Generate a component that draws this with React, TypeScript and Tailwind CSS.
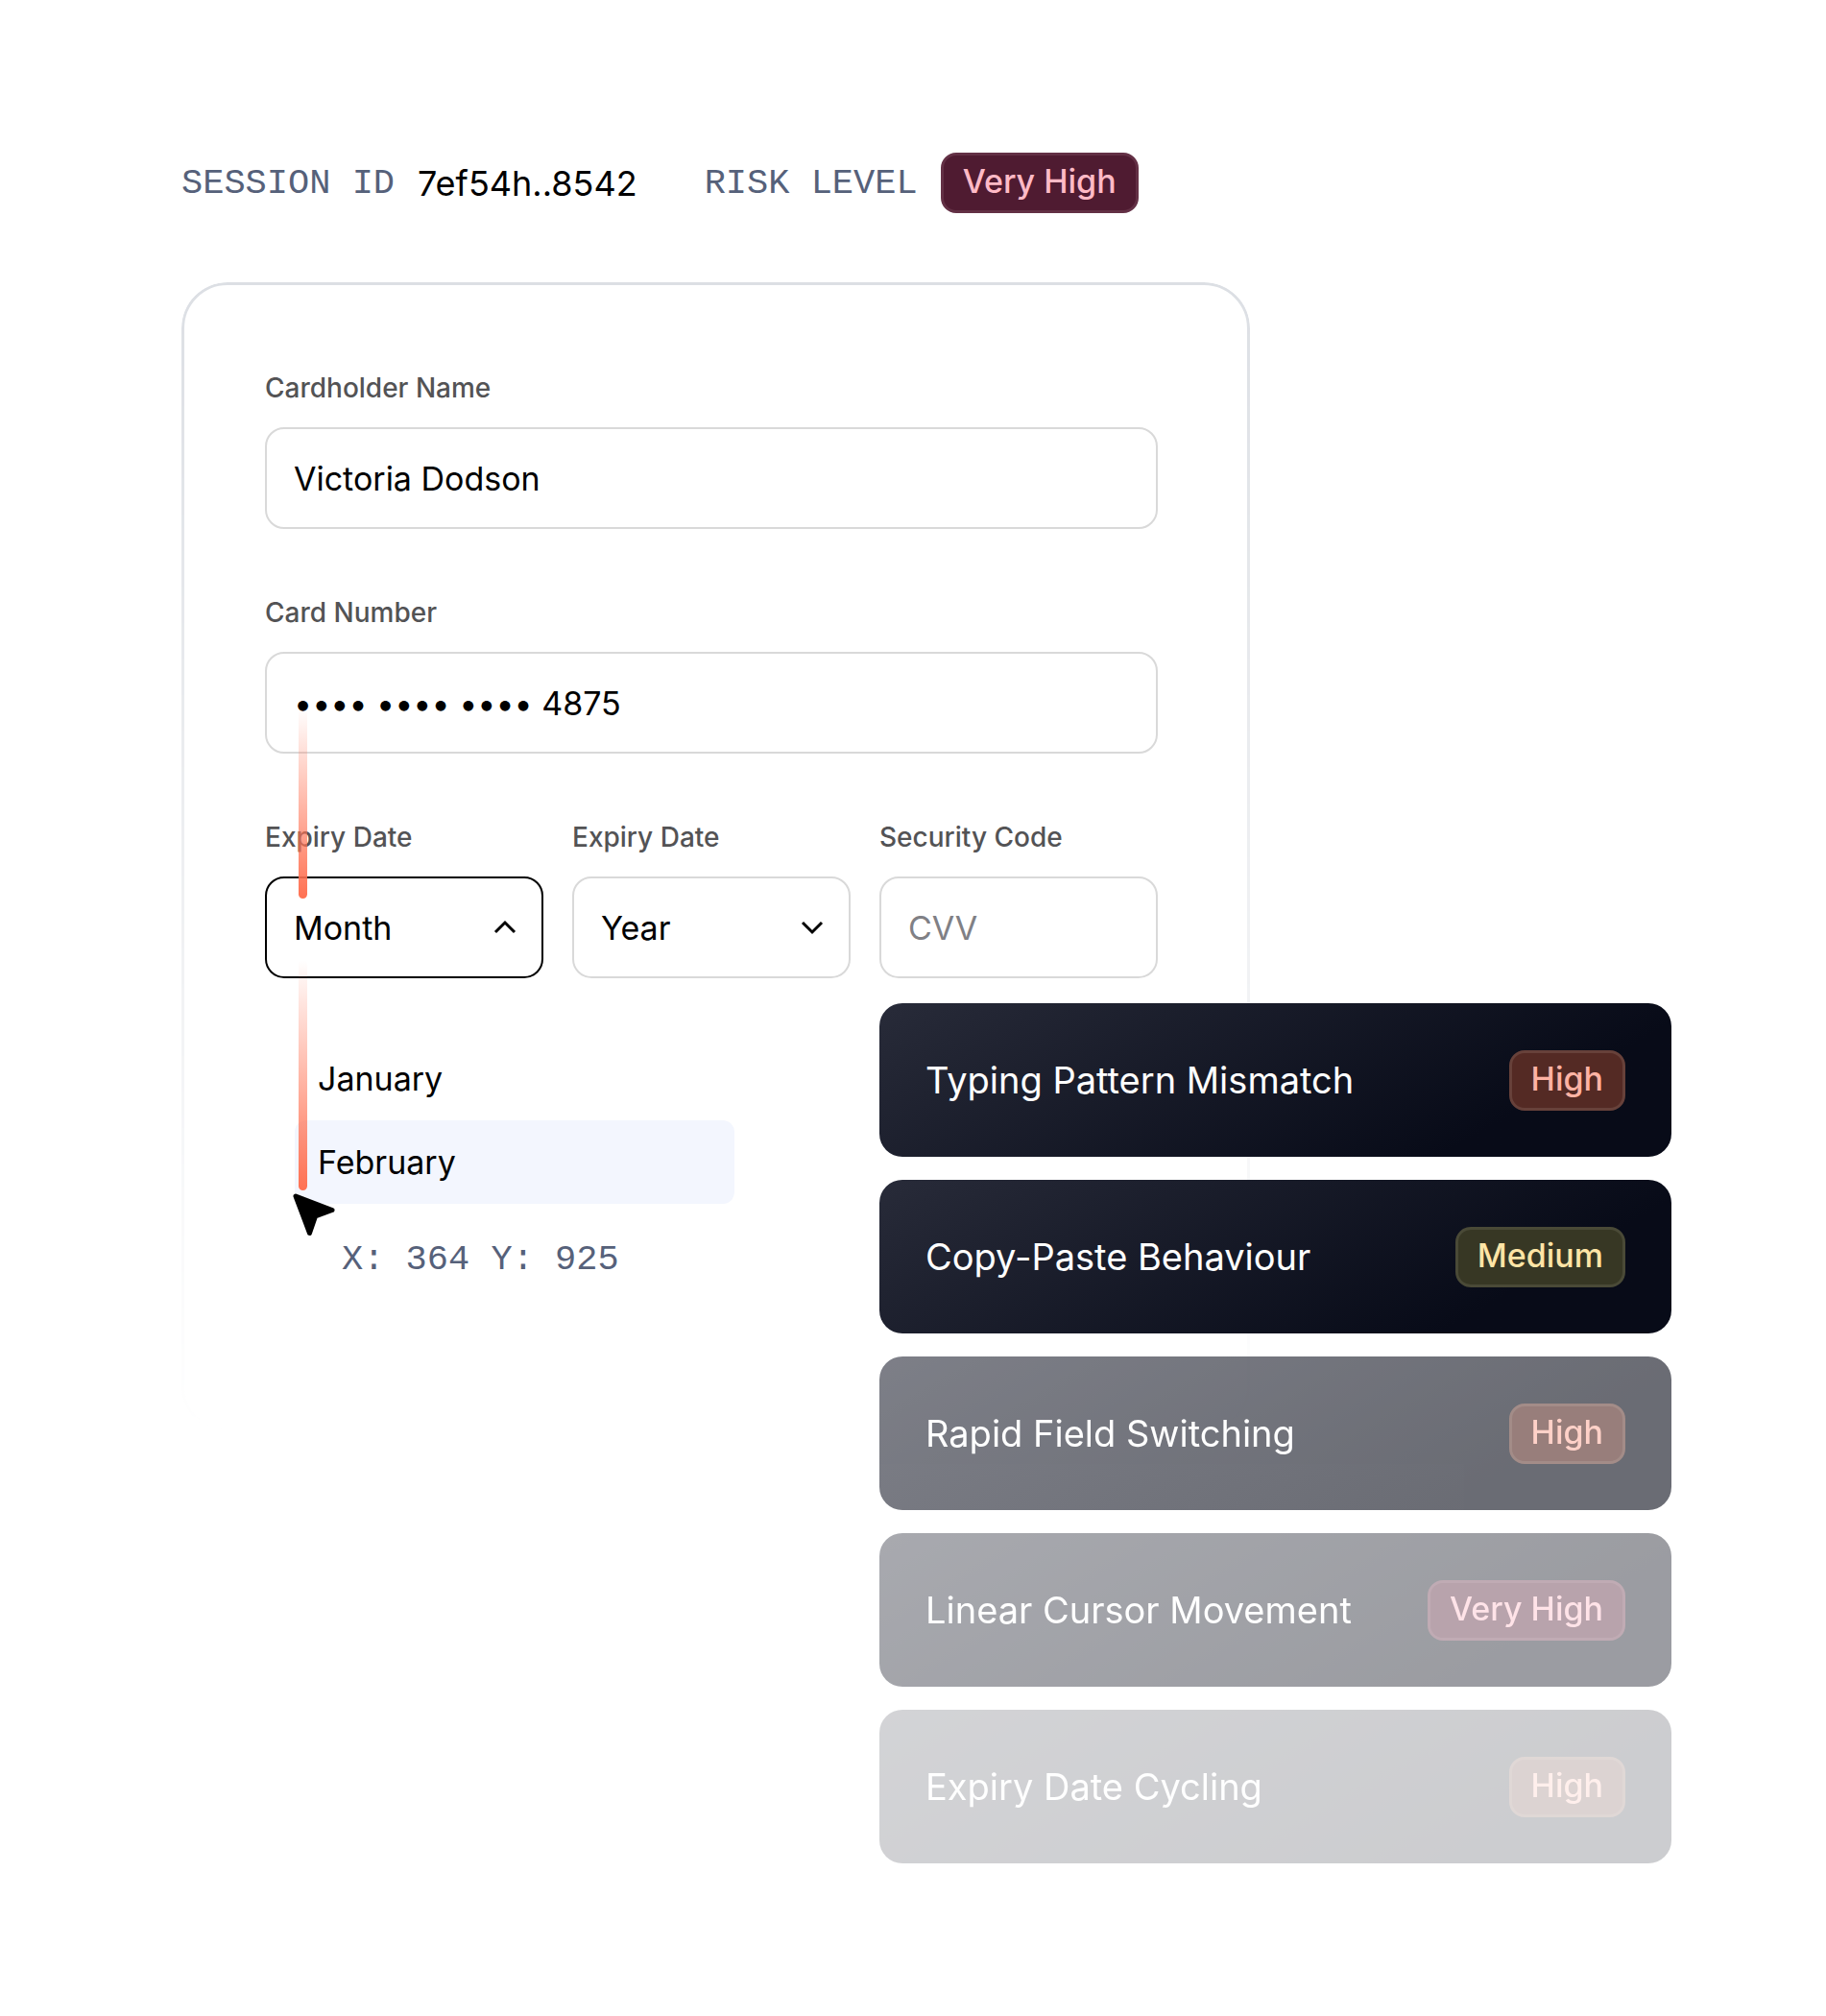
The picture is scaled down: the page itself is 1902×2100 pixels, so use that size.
import { ChevronDown, ChevronUp } from "lucide-react";
import { useState } from "react";

const BADGE_STYLES = {
    "Very High": "border-[#633045] bg-[#4f1b31] text-[#ffbac6]",
    High: "border-[#67413a] bg-[#542a24] text-[#ffb3a4]",
    Medium: "border-[#4a4a37] bg-[#373724] text-[#ffe5a6]",
};

type Level = keyof typeof BADGE_STYLES;

const signals: { title: string; level: Level; fade: string }[] = [
    { title: "Typing Pattern Mismatch", level: "High", fade: "opacity-100" },
    { title: "Copy-Paste Behaviour", level: "Medium", fade: "opacity-100" },
    { title: "Rapid Field Switching", level: "High", fade: "opacity-60" },
    { title: "Linear Cursor Movement", level: "Very High", fade: "opacity-40" },
    { title: "Expiry Date Cycling", level: "High", fade: "opacity-20" },
];

const months = ["January", "February"];

const FIELD =
    "h-[106px] w-full appearance-none rounded-[20px] border-2 bg-white px-7 text-[34px] text-black outline-none placeholder:text-[#808085]";
const LABEL = "text-[28px] leading-[34px] font-medium text-[#535355]";
const MONO = "font-['Liberation_Mono',monospace] text-[37px] leading-[40px] text-[#56617a]";

export default function App() {
    const [activeMonth, setActiveMonth] = useState("February");

    return (
        <main className="min-h-screen bg-white pt-[159px] pr-[161px] pb-[159px] pl-[189px] font-['Inter',sans-serif] text-black">
            <header className="mb-[72px] flex flex-wrap items-center">
                <span className={MONO}>SESSION ID</span>
                <span className="ml-6 text-[36px] leading-[44px]">7ef54h..8542</span>
                <span className={`${MONO} ml-[70px]`}>RISK LEVEL</span>
                <span className="ml-6 flex">
                    <Badge level="Very High" />
                </span>
            </header>

            <div className="grid">
                <form className="relative col-start-1 row-start-1 w-full max-w-[1113px] self-start pt-[93px] pr-24 pb-40 pl-[87px]">
                    {/* outline that dissolves towards the bottom */}
                    <div className="pointer-events-none absolute inset-0 rounded-[48px] border-[3px] border-[#dcdfe4] [mask-image:linear-gradient(to_bottom,black,transparent)]" />

                    <div className="flex flex-col gap-[70px]">
                        <div className="flex flex-col gap-6">
                            <label htmlFor="name" className={LABEL}>Cardholder Name</label>
                            <input id="name" type="text" defaultValue="Victoria Dodson" className={`${FIELD} border-[#d9d9d9]`} />
                        </div>

                        <div className="flex flex-col gap-6">
                            <label htmlFor="number" className={LABEL}>Card Number</label>
                            {/* calt off, otherwise Inter lifts the bullets that sit next to digits */}
                            <input id="number" type="text" defaultValue="•••• •••• •••• 4875" className={`${FIELD} border-[#d9d9d9] [font-feature-settings:'calt'_0]`} />
                        </div>

                        <div className="grid grid-cols-3 gap-[30px]">
                            <div className="flex flex-col gap-6">
                                <label htmlFor="month" className={LABEL}>Expiry Date</label>
                                <div className="relative">
                                    <select id="month" className={`${FIELD} border-black`}>
                                        <option>Month</option>
                                    </select>
                                    <ChevronUp className="pointer-events-none absolute inset-y-0 right-5 my-auto size-10" strokeWidth={1.8} strokeLinecap="butt" strokeLinejoin="miter" />
                                </div>
                            </div>
                            <div className="flex flex-col gap-6">
                                <label htmlFor="year" className={LABEL}>Expiry Date</label>
                                <div className="relative">
                                    <select id="year" className={`${FIELD} border-[#d9d9d9]`}>
                                        <option>Year</option>
                                    </select>
                                    <ChevronDown className="pointer-events-none absolute inset-y-0 right-5 my-auto size-10" strokeWidth={1.8} strokeLinecap="butt" strokeLinejoin="miter" />
                                </div>
                            </div>
                            <div className="flex flex-col gap-6">
                                <label htmlFor="cvv" className={LABEL}>Security Code</label>
                                <input id="cvv" type="text" placeholder="CVV" className={`${FIELD} border-[#d9d9d9]`} />
                            </div>
                        </div>
                    </div>

                    <ul role="listbox" aria-label="Month" className="mt-[61px] ml-[31px] max-w-[458px]">
                        {months.map((month) => (
                            <li
                                key={month}
                                role="option"
                                aria-selected={month === activeMonth}
                                onMouseEnter={() => setActiveMonth(month)}
                                className={`flex h-[87px] items-center rounded-xl pl-6 text-[34px] leading-[44px] ${month === activeMonth ? "bg-[#f3f6fe]" : ""}`}
                            >
                                {month}
                            </li>
                        ))}
                    </ul>
                    <p className={`${MONO} mt-[38px] ml-20`}>X: 364 Y: 925</p>

                    {/* cursor trail */}
                    <div className="pointer-events-none absolute top-[444px] left-[122px] h-[198px] w-[9px] rounded-full bg-linear-to-b from-[#ff7152]/0 to-[#ff7152]" />
                    <div className="pointer-events-none absolute top-[706px] left-[122px] h-[240px] w-[9px] rounded-full bg-linear-to-b from-[#ff7152]/0 to-[#ff7152]" />
                    <CursorIcon />
                </form>

                <ul className="relative col-start-1 row-start-1 mt-[751px] flex w-full max-w-[825px] flex-col gap-6 justify-self-end">
                    {signals.map((signal) => (
                        <li
                            key={signal.title}
                            className={`flex h-40 items-center justify-between rounded-3xl bg-linear-150 from-[#282b39] to-[#080b18] to-78% px-12 ${signal.fade}`}
                        >
                            <span className="text-[38px] leading-[46px] text-white">{signal.title}</span>
                            <Badge level={signal.level} />
                        </li>
                    ))}
                </ul>
            </div>
        </main>
    );
}

const Badge = ({ level }: { level: Level }) => {
    return (
        <span className={`rounded-2xl border-[3px] px-5 pt-1.5 pb-2.5 text-[34px] leading-[41px] font-medium ${BADGE_STYLES[level]}`}>
            {level}
        </span>
    );
};

const CursorIcon = () => {
    return (
        <svg className="pointer-events-none absolute top-[949px] left-[116px] size-11" viewBox="0 0 44 44" aria-hidden="true">
            <path
                d="M3 3L41 17.5L23.5 24L17.5 41.5Z"
                fill="black"
                stroke="black"
                strokeWidth="5"
                strokeLinejoin="round"
            />
        </svg>
    );
};
